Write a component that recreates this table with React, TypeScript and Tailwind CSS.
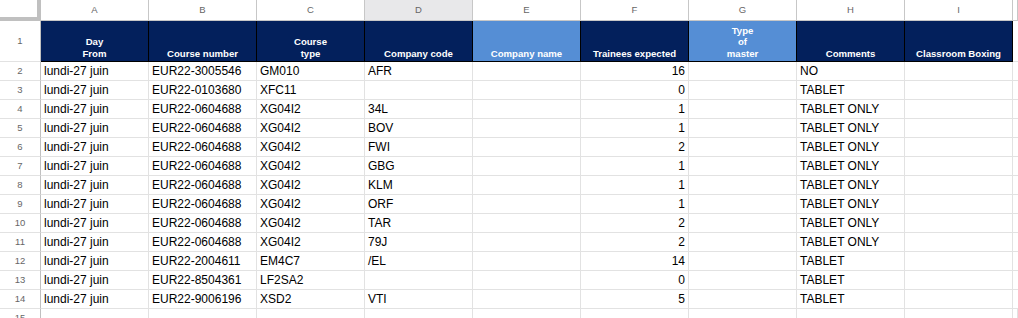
import React from "react";

const letters = ["A", "B", "C", "D", "E", "F", "G", "H", "I", ""];

type Head = { lines: string[]; light?: boolean };

const heads: Head[] = [
  { lines: ["Day", "From"] },
  { lines: ["Course number"] },
  { lines: ["Course", "type"] },
  { lines: ["Company code"] },
  { lines: ["Company name"], light: true },
  { lines: ["Trainees expected"] },
  { lines: ["Type", "of", "master"], light: true },
  { lines: ["Comments"] },
  { lines: ["Classroom Boxing"] },
];

const rows: string[][] = [
  ["EUR22-3005546", "GM010", "AFR", "16", "NO"],
  ["EUR22-0103680", "XFC11", "", "0", "TABLET"],
  ["EUR22-0604688", "XG04I2", "34L", "1", "TABLET ONLY"],
  ["EUR22-0604688", "XG04I2", "BOV", "1", "TABLET ONLY"],
  ["EUR22-0604688", "XG04I2", "FWI", "2", "TABLET ONLY"],
  ["EUR22-0604688", "XG04I2", "GBG", "1", "TABLET ONLY"],
  ["EUR22-0604688", "XG04I2", "KLM", "1", "TABLET ONLY"],
  ["EUR22-0604688", "XG04I2", "ORF", "1", "TABLET ONLY"],
  ["EUR22-0604688", "XG04I2", "TAR", "2", "TABLET ONLY"],
  ["EUR22-0604688", "XG04I2", "79J", "2", "TABLET ONLY"],
  ["EUR22-2004611", "EM4C7", "/EL", "14", "TABLET"],
  ["EUR22-8504361", "LF2SA2", "", "0", "TABLET"],
  ["EUR22-9006196", "XSD2", "VTI", "5", "TABLET"],
];

function RowNum({ n }: { n: number }) {
  return (
    <div className="flex items-center justify-center border-r border-b border-r-[#c0c0c0] border-b-[#e2e2e2] text-[9.5px] text-[#666]">
      {n}
    </div>
  );
}

function Cell({ text, right }: { text?: string; right?: boolean }) {
  return (
    <div
      className={`flex items-end overflow-hidden whitespace-nowrap border-r border-b border-[#e2e2e2] px-[3px] pb-[1px] text-[12px] leading-[15px] text-black ${
        right ? "justify-end" : "justify-start"
      }`}
    >
      {text}
    </div>
  );
}

export default function App() {
  return (
    <div
      className="h-[318px] w-[1018px] overflow-hidden bg-white"
      style={{ fontFamily: '"Liberation Sans", Arial, sans-serif' }}
    >
      <div className="grid grid-cols-[41px_repeat(9,108px)_1fr] grid-rows-[21px_41px_repeat(14,19px)]">
        {/* column letters */}
        <div className="border-r-4 border-b-4 border-[#c0c0c0] bg-white" />
        {letters.map((l, i) => (
          <div
            key={"l" + i}
            className={`flex items-center justify-center border-r border-b border-[#c7c7c7] text-[9.5px] text-[#666] ${
              l === "D" ? "bg-[#e8e8ea]" : "bg-white"
            }`}
          >
            {l}
          </div>
        ))}

        {/* header row */}
        <RowNum n={1} />
        {heads.map((h, i) => (
          <div
            key={"h" + i}
            className={`flex flex-col items-center justify-end border-r border-b border-black pb-[2px] text-center text-[9.6px] font-bold leading-[11.5px] text-white ${
              h.light ? "bg-[#558ed5]" : "bg-[#03205c]"
            }`}
          >
            {h.lines.map((t) => (
              <span key={t} className="whitespace-nowrap">
                {t}
              </span>
            ))}
          </div>
        ))}
        <div className="border-b border-[#e2e2e2]" />

        {/* data */}
        {rows.map((r, i) => (
          <React.Fragment key={"r" + i}>
            <RowNum n={i + 2} />
            <Cell text="lundi-27 juin" />
            <Cell text={r[0]} />
            <Cell text={r[1]} />
            <Cell text={r[2]} />
            <Cell />
            <Cell text={r[3]} right />
            <Cell />
            <Cell text={r[4]} />
            <Cell />
            <div className="border-b border-[#e2e2e2]" />
          </React.Fragment>
        ))}

        <RowNum n={15} />
        {letters.map((_, i) => (
          <div key={"e" + i} className="border-r border-b border-[#e2e2e2]" />
        ))}
      </div>
    </div>
  );
}
